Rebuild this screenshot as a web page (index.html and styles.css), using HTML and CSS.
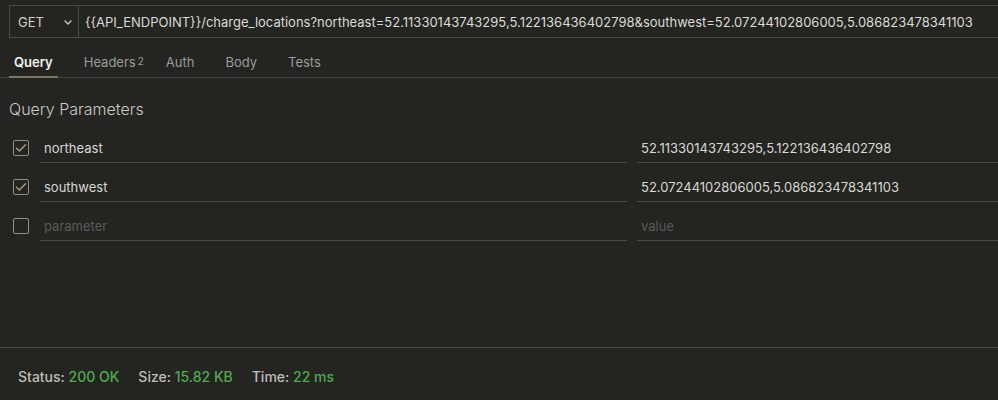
FILE: index.html
```html
<!DOCTYPE html>
<html>
<head>
<meta charset="utf-8">
<link rel="stylesheet" href="styles.css">
</head>
<body>
<div class="app">
  <div class="urlbar">
    <div class="method">
      <span class="method-text">GET</span>
      <svg class="chev" width="8" height="5" viewBox="0 0 8 5"><path d="M1 1 L4 4 L7 1" fill="none" stroke="#c8c8c4" stroke-width="1.4" stroke-linecap="round" stroke-linejoin="round"/></svg>
    </div>
    <div class="url">{{API_ENDPOINT}}/charge_locations?northeast=52.11330143743295,5.122136436402798&amp;southwest=52.07244102806005,5.086823478341103</div>
  </div>
  <div class="tabs">
    <div class="tab active">Query</div>
    <div class="tab headers">Headers<sup class="count">2</sup></div>
    <div class="tab">Auth</div>
    <div class="tab">Body</div>
    <div class="tab">Tests</div>
  </div>
  <div class="params">
    <div class="params-title">Query Parameters</div>
    <div class="row">
      <span class="cb checked"><svg width="12" height="10" viewBox="0 0 12 10"><path d="M1.5 5.2 L4.4 8 L10.5 1.8" fill="none" stroke="#a89c7e" stroke-width="1.5" stroke-linecap="round" stroke-linejoin="round"/></svg></span>
      <div class="field name">northeast</div>
      <div class="field value">52.11330143743295,5.122136436402798</div>
    </div>
    <div class="row">
      <span class="cb checked"><svg width="12" height="10" viewBox="0 0 12 10"><path d="M1.5 5.2 L4.4 8 L10.5 1.8" fill="none" stroke="#a89c7e" stroke-width="1.5" stroke-linecap="round" stroke-linejoin="round"/></svg></span>
      <div class="field name">southwest</div>
      <div class="field value">52.07244102806005,5.086823478341103</div>
    </div>
    <div class="row">
      <span class="cb"></span>
      <div class="field name placeholder">parameter</div>
      <div class="field value placeholder">value</div>
    </div>
  </div>
  <div class="footer">
    <span class="stat"><span class="label">Status:</span> <span class="ok">200 OK</span></span>
    <span class="stat"><span class="label">Size:</span> <span class="ok">15.82 KB</span></span>
    <span class="stat"><span class="label">Time:</span> <span class="ok">22 ms</span></span>
  </div>
</div>
</body>
</html>
```
FILE: styles.css
```css
html, body {
  margin: 0;
  padding: 0;
  background: #242421;
}
body {
  font-family: Inter, "Liberation Sans", sans-serif;
  color: #d6d6d2;
  width: 998px;
  height: 400px;
  overflow: hidden;
}
.app {
  display: flex;
  flex-direction: column;
  height: 400px;
}
.urlbar {
  display: flex;
  margin: 5px 0 0 9px;
  height: 31px;
  border: 1px solid #494945;
  border-right: none;
  font-size: 13px;
}
.method {
  width: 69px;
  flex: none;
  display: flex;
  align-items: center;
  justify-content: space-between;
  padding: 0 6px 0 8px;
  box-sizing: border-box;
  border-right: 1px solid #494945;
  color: #cfcfcb;
}
.method-text {
  font-size: 13px;
}
.chev {
  display: block;
  margin-top: 1px;
}
.url {
  display: flex;
  align-items: center;
  padding-left: 6px;
  white-space: nowrap;
  color: #dadad6;
}
.tabs {
  display: flex;
  height: 39px;
  border-bottom: 1px solid #42423e;
  padding-left: 9px;
  font-size: 13px;
}
.tab {
  display: flex;
  align-items: center;
  padding: 8px 5px 0;
  margin-right: 21px;
  color: #9b9b97;
  position: relative;
}
.tab.headers {
  margin-right: 12px;
}
.tab.active {
  color: #f2f2ef;
  font-weight: 600;
}
.tab.active::after {
  content: "";
  position: absolute;
  left: 0;
  right: 0;
  bottom: -1px;
  height: 2px;
  background: #7b7662;
}
.count {
  font-size: 10px;
  margin-left: 2px;
  position: relative;
  top: -1px;
}
.params {
  padding: 21px 0 0 9px;
}
.params-title {
  font-size: 16px;
  font-weight: 300;
  color: #cacac6;
  height: 21px;
  line-height: 21px;
  margin-bottom: 5px;
}
.row {
  display: flex;
  align-items: flex-start;
  height: 39px;
}
.cb {
  flex: none;
  width: 16px;
  height: 16px;
  box-sizing: border-box;
  border: 1px solid #8e8e89;
  border-radius: 2px;
  margin: 15px 11px 0 4px;
  display: flex;
  align-items: center;
  justify-content: center;
}
.field {
  display: flex;
  align-items: center;
  padding-left: 4px;
  border-bottom: 1px solid #4a4a46;
  font-size: 13px;
  color: #d8d8d4;
  height: 38px;
  box-sizing: border-box;
  padding-top: 8px;
}
.name {
  width: 587px;
  flex: none;
  margin-right: 10px;
}
.value {
  flex: 1;
}
.placeholder {
  color: #5a5a56;
}
.footer {
  margin-top: auto;
  height: 53px;
  box-sizing: border-box;
  border-top: 1px solid #4a4a46;
  display: flex;
  align-items: center;
  padding: 4px 0 0 18px;
  font-size: 14px;
  font-weight: 500;
  gap: 19px;
}
.label {
  color: #bebeba;
}
.ok {
  color: #4cae4c;
}
```
